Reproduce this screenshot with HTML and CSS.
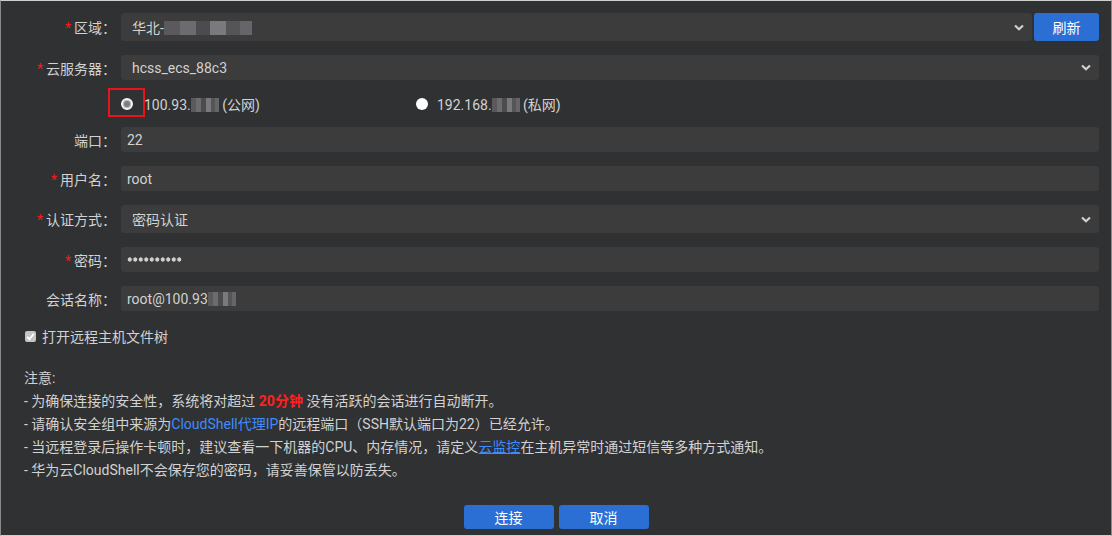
FILE: index.html
```html
<!DOCTYPE html>
<html lang="zh-CN">
<head>
    <meta charset="UTF-8">
    <meta name="viewport" content="width=device-width, initial-scale=1.0">
    <title>CloudShell</title>
    <link rel="stylesheet" href="styles.css">
</head>
<body>
    <div class="dialog">
        <div class="form">
            <div class="row row-tall">
                <div class="label"><i>*</i>区域</div>
                <div class="control select">
                    <span>华北-<span class="mosaic mosaic-wide"></span></span>
                    <svg class="chevron" viewBox="0 0 10 7"><path d="M1 1.5 5 5.3 9 1.5" fill="none" stroke="#d0d0d0" stroke-width="2.2"/></svg>
                </div>
                <button class="btn btn-refresh">刷新</button>
            </div>
            <div class="row">
                <div class="label"><i>*</i>云服务器</div>
                <div class="control select">
                    <span>hcss_ecs_88c3</span>
                    <svg class="chevron" viewBox="0 0 10 7"><path d="M1 1.5 5 5.3 9 1.5" fill="none" stroke="#d0d0d0" stroke-width="2.2"/></svg>
                </div>
            </div>
            <div class="row row-radio">
                <div class="spacer"></div>
                <div class="radios">
                    <div class="radio-item radio-first">
                        <span class="radio checked"></span>
                        <span>100.93.<span class="mosaic mosaic-small"></span> (公网)</span>
                        <span class="mark"></span>
                    </div>
                    <div class="radio-item">
                        <span class="radio"></span>
                        <span>192.168.<span class="mosaic mosaic-small"></span> (私网)</span>
                    </div>
                </div>
            </div>
            <div class="row">
                <div class="label">端口</div>
                <div class="control"><span>22</span></div>
            </div>
            <div class="row">
                <div class="label"><i>*</i>用户名</div>
                <div class="control"><span>root</span></div>
            </div>
            <div class="row row-tall">
                <div class="label"><i>*</i>认证方式</div>
                <div class="control select">
                    <span>密码认证</span>
                    <svg class="chevron" viewBox="0 0 10 7"><path d="M1 1.5 5 5.3 9 1.5" fill="none" stroke="#d0d0d0" stroke-width="2.2"/></svg>
                </div>
            </div>
            <div class="row">
                <div class="label"><i>*</i>密码</div>
                <div class="control"><span class="dots"></span></div>
            </div>
            <div class="row">
                <div class="label">会话名称</div>
                <div class="control"><span>root@100.93<span class="mosaic mosaic-small"></span></span></div>
            </div>
        </div>

        <label class="check-row">
            <span class="checkbox">
                <svg viewBox="0 0 11 11"><path d="M2.2 5.8 4.5 8.2 8.8 2.8" fill="none" stroke="#fff" stroke-width="1.8"/></svg>
            </span>
            打开远程主机文件树
        </label>

        <div class="notes">
            <p>注意:</p>
            <p>- 为确保连接的安全性，系统将对超过 <b class="warn">20分钟</b> 没有活跃的会话进行自动断开。</p>
            <p>- 请确认安全组中来源为<a class="link">CloudShell代理IP</a>的远程端口（SSH默认端口为22）已经允许。</p>
            <p>- 当远程登录后操作卡顿时，建议查看一下机器的CPU、内存情况，请定义<a class="link link-under">云监控</a>在主机异常时通过短信等多种方式通知。</p>
            <p>- 华为云CloudShell不会保存您的密码，请妥善保管以防丢失。</p>
        </div>

        <div class="actions">
            <button class="btn">连接</button>
            <button class="btn">取消</button>
        </div>
    </div>
</body>
</html>
```

FILE: styles.css
```css
* {
    margin: 0;
    padding: 0;
    box-sizing: border-box;
}
body {
    background-color: #303133;
    font-family: Roboto, "Noto Sans CJK SC", sans-serif;
    font-size: 14px;
    color: #d2d2d2;
}
.dialog {
    width: 1112px;
    height: 536px;
    border: 1px solid #8a8a8a;
    border-top-color: #cfcfcf;
    border-bottom-color: #cfcfcf;
    background-color: #303133;
}

.form {
    padding: 12px 12px 0 0;
    display: flex;
    flex-direction: column;
    gap: 14px;
}
.row {
    display: flex;
    align-items: center;
    height: 25px;
}
.row-tall {
    height: 28px;
}
.row-radio {
    height: 19px;
}
.label {
    width: 120px;
    flex-shrink: 0;
    text-align: right;
    padding-right: 5px;
    white-space: nowrap;
}
.label::after {
    content: "：";
    font-family: "Noto Sans CJK TC", sans-serif;
}
.label i {
    font-style: normal;
    color: #f01c1c;
    margin-right: 3px;
}
.spacer {
    width: 120px;
    flex-shrink: 0;
}
.control {
    flex: 1;
    height: 100%;
    background-color: #3c3c3c;
    border-radius: 3px;
    padding: 0 6px;
    display: flex;
    align-items: center;
    justify-content: space-between;
}
.select {
    padding: 0 8px 0 11px;
}
.chevron {
    width: 10px;
    height: 7px;
}
.dots {
    width: 55px;
    height: 5px;
    background: radial-gradient(circle, #cfcfcf 1.9px, transparent 2.4px) 0 0 / 5.5px 5px repeat-x;
}
.mosaic {
    display: inline-block;
    height: 14px;
    vertical-align: -2px;
    background: linear-gradient(90deg, #5a5a5c 0 18%, #6c6c70 18% 36%, #4c4c4e 36% 52%, #7a7a7e 52% 70%, #555558 70% 86%, #66666a 86%);
}
.mosaic-wide {
    width: 88px;
}
.mosaic-small {
    width: 28px;
}

.btn {
    width: 90px;
    height: 24px;
    border: none;
    border-radius: 3px;
    background-color: #2b6fd5;
    color: #fff;
    font-family: inherit;
    font-size: 14px;
}
.btn-refresh {
    width: 65px;
    height: 28px;
    margin-left: 2px;
}

.radios {
    flex: 1;
    display: flex;
    align-items: center;
}
.radio-item {
    display: flex;
    align-items: center;
    gap: 9px;
    position: relative;
}
.radio-first {
    width: 295px;
    gap: 11px;
}
.radio {
    width: 12px;
    height: 12px;
    border-radius: 50%;
    background-color: #fff;
    flex-shrink: 0;
}
.radio.checked {
    border: 2px solid #f4f4f4;
    background-color: #7d7d7d;
    box-shadow: inset 0 0 0 1px #bdbdbd;
}
.mark {
    position: absolute;
    left: -13px;
    top: -6px;
    width: 37px;
    height: 29px;
    border: 2px solid #e8141a;
}

.check-row {
    display: flex;
    align-items: center;
    gap: 6px;
    height: 20px;
    margin: 15px 0 0 24px;
}
.checkbox {
    width: 11px;
    height: 11px;
    border-radius: 2px;
    background-color: #c4c4c4;
    display: flex;
}
.checkbox svg {
    width: 11px;
    height: 11px;
}

.notes {
    margin: 21px 0 0 23px;
    line-height: 23px;
}
.warn {
    color: #ff2020;
    font-weight: bold;
}
.link {
    color: #3f8cff;
}
.link-under {
    text-decoration: underline;
}

.actions {
    display: flex;
    justify-content: center;
    gap: 5px;
    margin-top: 23px;
}
```
